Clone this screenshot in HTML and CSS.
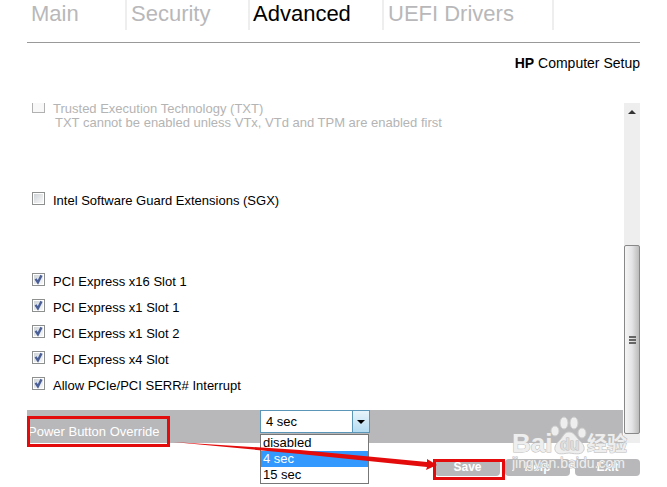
FILE: index.html
```html
<!DOCTYPE html>
<html lang="en">
<head>
    <meta charset="UTF-8">
    <meta name="viewport" content="width=device-width, initial-scale=1.0">
    <title>HP Computer Setup</title>
    <link rel="stylesheet" href="styles.css">
</head>
<body>
    <div class="page">
        <nav class="tabs">
            <a class="tab tab-main" href="#">Main</a>
            <a class="tab tab-security" href="#">Security</a>
            <a class="tab tab-advanced active" href="#">Advanced</a>
            <a class="tab tab-drivers" href="#">UEFI Drivers</a>
        </nav>
        <h1 class="title"><b>HP</b> Computer Setup</h1>

        <div class="panel">
            <div class="settings">
                <div class="group group-txt">
                    <label class="row disabled"><input type="checkbox" disabled>Trusted Execution Technology (TXT)</label>
                    <p class="hint">TXT cannot be enabled unless VTx, VTd and TPM are enabled first</p>
                </div>
                <div class="group">
                    <label class="row"><input type="checkbox">Intel Software Guard Extensions (SGX)</label>
                </div>
                <div class="group group-slots">
                    <label class="row"><input type="checkbox" checked>PCI Express x16 Slot 1</label>
                    <label class="row"><input type="checkbox" checked>PCI Express x1 Slot 1</label>
                    <label class="row"><input type="checkbox" checked>PCI Express x1 Slot 2</label>
                    <label class="row"><input type="checkbox" checked>PCI Express x4 Slot</label>
                    <label class="row"><input type="checkbox" checked>Allow PCIe/PCI SERR# Interrupt</label>
                </div>
                <div class="override">
                    <label class="override-label" for="override">Power Button Override</label>
                    <div class="dropdown">
                        <select id="override">
                            <option>disabled</option>
                            <option selected>4 sec</option>
                            <option>15 sec</option>
                        </select>
                        <ul class="options">
                            <li>disabled</li>
                            <li class="selected">4 sec</li>
                            <li>15 sec</li>
                        </ul>
                    </div>
                </div>
            </div>
            <div class="scrollbar">
                <div class="scroll-up"></div>
                <div class="thumb"><i></i><i></i><i></i></div>
            </div>
        </div>

        <div class="actions">
            <button>Save</button>
            <button>Help</button>
            <button>Exit</button>
        </div>

        <svg class="marks" width="667" height="487" viewBox="0 0 667 487">
            <rect x="28.5" y="417.5" width="140" height="28" />
            <rect x="434.5" y="460.5" width="69" height="18" />
            <path d="M173 442 L300 450 L427 462 L427 459 L437 465 L426 470 L427 467 L300 454 Z" />
        </svg>

        <svg class="watermark" width="120" height="66" viewBox="0 0 120 66">
            <g class="paw">
                <ellipse cx="43" cy="17" rx="4" ry="5" />
                <ellipse cx="52" cy="9" rx="4" ry="6" />
                <ellipse cx="62" cy="9" rx="4" ry="6" />
                <ellipse cx="70" cy="19" rx="4" ry="5" />
                <path d="M57 18c5 0 7 5 10 8s6 6 5 10c-2 5-7 4-15 3-8 1-12 2-14-3-1-4 2-7 5-10s4-8 9-8z" />
            </g>
            <text class="logo" x="0" y="38">Bai</text>
            <text class="du" x="48" y="36">du</text>
            <text class="logo cn" x="75" y="37">经验</text>
            <text class="site" x="0" y="54">jingyan.baidu.com</text>
        </svg>
    </div>
</body>
</html>
```
FILE: styles.css
```css
:root {
    --gray: #b8b8ba;
    --red: #e30b0b;
}

* { box-sizing: border-box; }
body { margin: 0; background: #fff; color: #000; font: 13px/16px "Liberation Sans", Arial, sans-serif; }
.page { position: relative; min-height: 100vh; padding: 0 27px 11px; }

.tabs { display: flex; height: 43px; border-bottom: 1px solid #999; }
.tab { height: 30px; padding: 0 4px; border-right: 2px solid #eee; color: var(--gray); font-size: 22px; line-height: 28px; text-decoration: none; white-space: nowrap; }
.tab.active { padding: 0 3px; color: #000; }
.tab-main { width: 100px; }
.tab-security { width: 123px; }
.tab-advanced { width: 134px; }
.tab-drivers { width: 170px; }

.title { margin: 12px 0 32px; font-size: 14px; font-weight: normal; line-height: 16px; text-align: right; }

.panel { display: flex; height: 340px; }
.settings { flex: 1; display: flex; flex-direction: column; }
.group { display: flex; flex-direction: column; margin-bottom: 56px; }
.group-slots { margin-bottom: 12px; }
.row { display: flex; align-items: center; gap: 8px; height: 26px; padding: 1px 0 0 5px; }
.row.disabled, .hint { color: #b4b4b4; }
.hint { margin: 0 0 0 28px; }

/* first group is scrolled partly out of view */
.group-txt { height: 84px; margin: 0; }
.group-txt .row { height: 12px; padding-top: 0; }
.group-txt + .group { margin-bottom: 55px; }

input[type="checkbox"] { appearance: none; width: 13px; height: 13px; margin: 0 0 4px; padding: 1px; border: 1px solid #8e8f8f; background: linear-gradient(135deg, #d0d4d8, #f8f8f8) content-box, #fff; }
input[type="checkbox"]:checked { background: url("data:image/svg+xml,%3Csvg xmlns='http://www.w3.org/2000/svg' viewBox='0 0 11 11'%3E%3Cpath d='M3 5l2 3L8 2' fill='none' stroke='%234a5f97' stroke-width='2'/%3E%3C/svg%3E") border-box, linear-gradient(135deg, #d0d4d8, #f8f8f8) content-box, #fff; }
input[type="checkbox"]:disabled { height: 10px; margin-bottom: 2px; border-color: #b1b1b1; border-top: 0; background: #f8f8f8; }

.override { display: flex; height: 33px; background: var(--gray); }
.override-label { width: 233px; padding: 14px 0 0 1px; color: #fff; }
.dropdown { position: relative; width: 110px; height: 23px; }
.dropdown::after { content: ""; position: absolute; top: 10px; right: 5px; border: 4px solid transparent; border-top-color: #000; border-bottom: 0; }
select { appearance: none; width: 100%; height: 23px; padding: 0 5px; border: 1px solid #5b96b8; border-radius: 0; background: linear-gradient(#5b96b8, #5b96b8) right 16px top / 1px 100% no-repeat, linear-gradient(#e8f4fb, #b5dcf1) right / 16px 100% no-repeat, #fff; color: #000; font: inherit; }
.options { position: absolute; top: 24px; left: 0; width: 109px; margin: 0; padding: 0; border: 1px solid #777; background: #fff; list-style: none; }
.options li { padding-left: 2px; }
.options .selected { background: #3399ff; color: #fff; }

.scrollbar { width: 16px; margin-left: 1px; padding-bottom: 9px; display: flex; flex-direction: column; background: #eee; }
.scroll-up { flex: 1; }
.scroll-up::before { content: ""; display: block; width: 0; margin: 7px auto 0; border: 4px solid transparent; border-bottom-color: #333; border-top: 0; }
.thumb { display: flex; flex-direction: column; justify-content: center; align-items: center; gap: 1px; height: 189px; border: 1px solid #888; border-radius: 2px; background: linear-gradient(90deg, #f5f5f5, #e4e4e6 50%, #bbb); }
.thumb i { width: 7px; height: 2px; background: #666; }

.actions { display: flex; justify-content: flex-end; gap: 5px; margin-top: 16px; }
button { width: 65px; height: 17px; padding: 0; border: 0; border-radius: 4px; background: var(--gray); color: #fff; font: bold 12px/17px "Liberation Sans", Arial, sans-serif; }

.marks { position: absolute; top: 0; left: 0; }
.marks rect { fill: none; stroke: var(--red); stroke-width: 3; }
.marks path { fill: var(--red); }

.watermark { position: absolute; top: 414px; left: 512px; font-family: "Liberation Sans", "Noto Sans CJK SC", sans-serif; }
.watermark .paw { fill: #eee; stroke: #ccc; }
.watermark text { fill: #eee; stroke: #bbb; stroke-width: 1; paint-order: stroke; }
.watermark .logo { font-size: 26px; font-weight: bold; }
.watermark .cn { font-size: 20px; }
.watermark .du { fill: #ddd; font-size: 16px; font-weight: bold; }
.watermark .site { font-size: 14px; }
```
